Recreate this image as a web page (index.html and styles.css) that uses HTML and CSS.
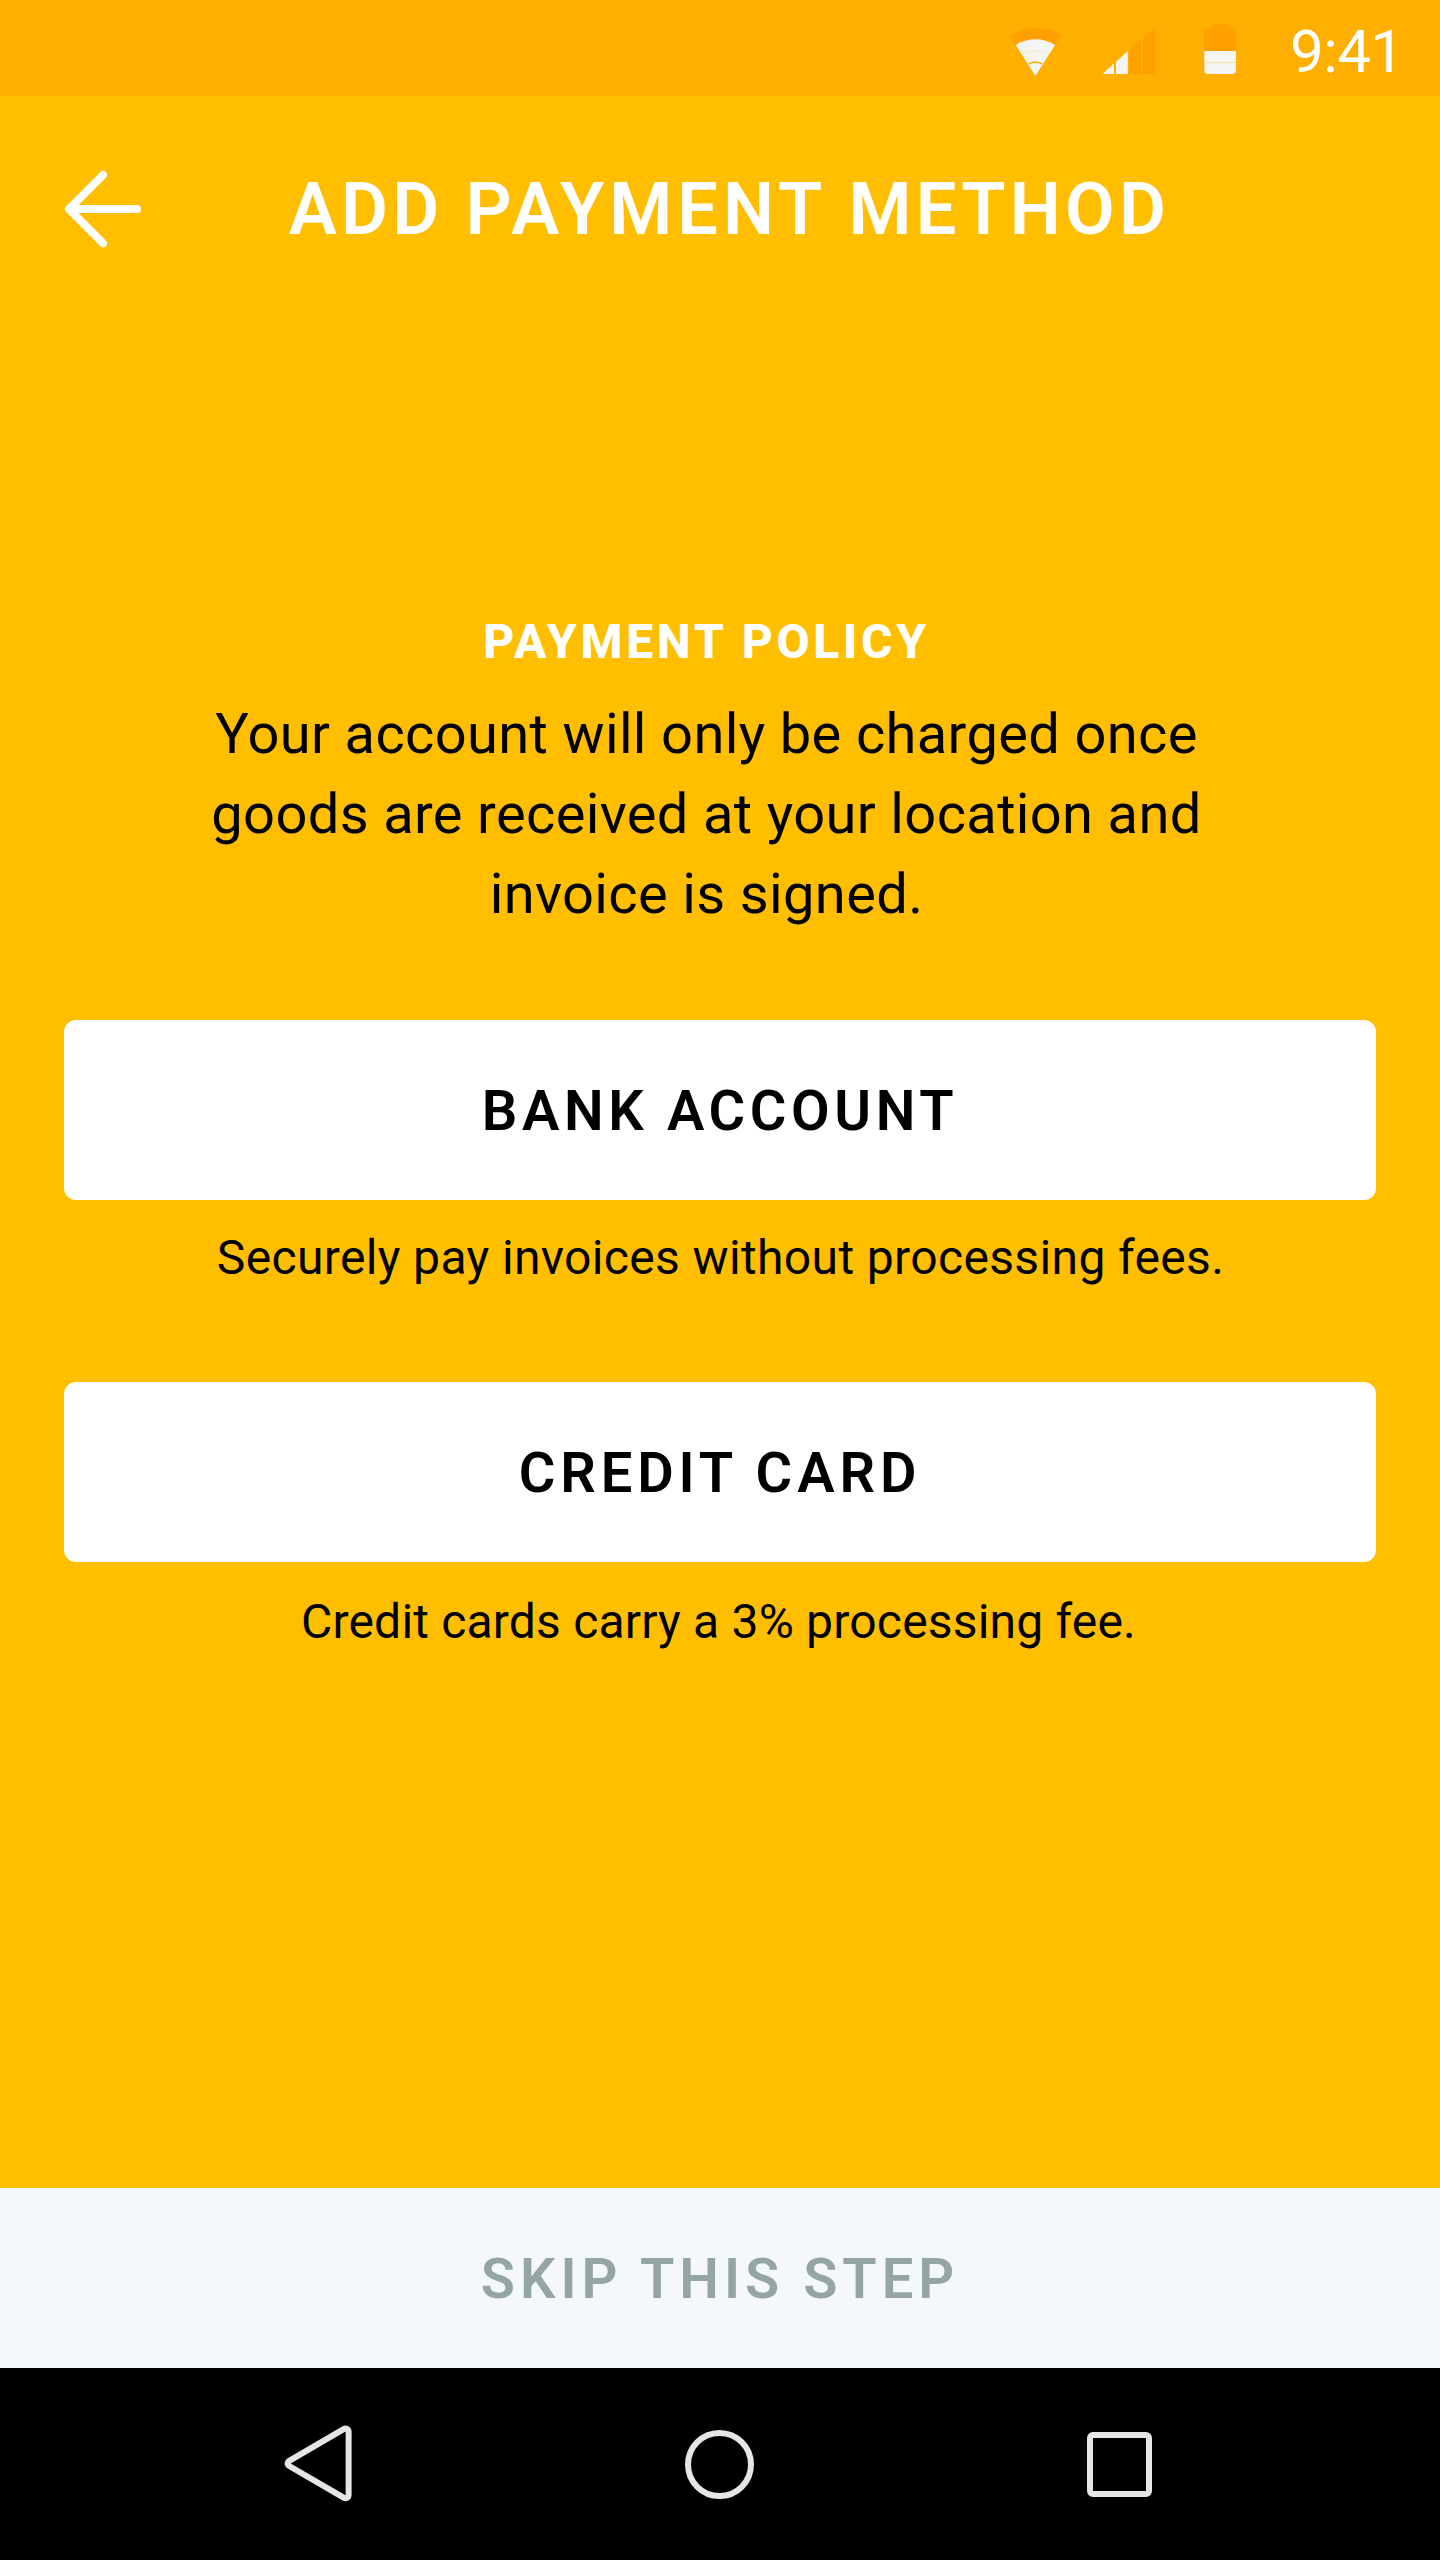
FILE: index.html
```html
<!DOCTYPE html>
<html lang="en">
<head>
<meta charset="utf-8">
<title>Add Payment Method</title>
<link rel="stylesheet" href="styles.css">
</head>
<body>
<div class="screen">
  <div class="status-bar">
    <svg class="status-wifi" width="53" height="54" viewBox="1009 24 53 54" aria-hidden="true">
      <path class="icon-dim" d="M1035.4 76L1009.6 35.5A48 48 0 0 1 1061.2 35.5Z"/>
      <path class="icon-lit" d="M1035.4 76L1015.7 45A36.7 36.7 0 0 1 1055.1 45Z"/>
      <path class="wifi-line" d="M1022 54.9A25 25 0 0 1 1048.8 54.9"/>
      <path class="wifi-gap" d="M1028.6 64.2A13 13 0 0 1 1042.2 64.2"/>
    </svg>
    <svg class="status-signal" width="54" height="54" viewBox="1102 24 54 54" aria-hidden="true">
      <path class="icon-lit" d="M1102.6 74L1114 63.2V74ZM1116 74V61.7L1127.8 51V74Z"/>
      <path class="icon-dim" d="M1129.5 74V49.7L1141 39.8V74ZM1143 74V38.3L1155 28V74Z"/>
    </svg>
    <svg class="status-battery" width="33" height="54" viewBox="1204 24 33 54" aria-hidden="true">
      <path class="icon-dim" d="M1204.3 51V32A4 4 0 0 1 1208.3 28H1212V24H1228V28H1232A4 4 0 0 1 1236 32V51Z"/>
      <path class="icon-lit" d="M1204.3 51H1236V70A4 4 0 0 1 1232 74H1208.3A4 4 0 0 1 1204.3 70Z"/>
      <path class="battery-line" d="M1204.3 62.5H1236"/>
    </svg>
    <span class="clock">9:41</span>
  </div>

  <header class="header">
    <svg class="back" width="80" height="80" viewBox="63 169 80 80" role="img" aria-label="Back">
      <path d="M103 175L69 209L103 243.3M69 209H137"/>
    </svg>
    <h1 class="title">ADD <span class="title-wide">PAYMENT </span>METHOD</h1>
  </header>

  <main class="content">
    <section class="policy">
      <h2 class="policy-title">PAYMENT POLICY</h2>
      <p class="policy-text">Your account will only be charged once<br>goods are received at your location and<br>invoice is signed.</p>
    </section>
    <button class="option option-bank" type="button">BANK ACCOUNT</button>
    <p class="note note-bank">Securely pay invoices without processing fees.</p>
    <button class="option option-card" type="button">CREDIT CARD</button>
    <p class="note note-card">Credit cards carry a 3% processing fee.</p>
  </main>

  <button class="skip" type="button">SKIP THIS STEP</button>

  <nav class="nav-bar">
    <svg width="80" height="80" viewBox="278 2424 80 80" role="img" aria-label="Back">
      <path class="nav-shape" d="M290.7 2463.4L345.6 2431.5V2495.3Z"/>
    </svg>
    <svg width="80" height="80" viewBox="679 2424 80 80" role="img" aria-label="Home">
      <circle class="nav-ring" cx="719.5" cy="2464.5" r="31.5"/>
    </svg>
    <svg width="80" height="80" viewBox="1080 2424 80 80" role="img" aria-label="Recents">
      <rect class="nav-shape" x="1093" y="2438" width="53" height="53"/>
    </svg>
  </nav>
</div>
</body>
</html>
```
FILE: styles.css
```css
* {
  box-sizing: border-box;
}

body,
h1,
h2,
p {
  margin: 0;
}

body {
  font-family: Roboto, "Noto Sans", sans-serif;
}

button {
  display: block;
  border: 0;
  font-family: inherit;
}

svg {
  display: block;
  flex: none;
}

.screen {
  display: flex;
  flex-direction: column;
  width: 1440px;
  height: 2560px;
  overflow: hidden;
  background: #ffbf00;
}

/* Status bar */
.status-bar {
  display: flex;
  flex: none;
  align-items: flex-start;
  height: 96px;
  padding: 24px 0 0 1009px;
  background: #ffaf00;
}

.status-signal {
  margin-left: 40px;
}

.status-battery {
  margin-left: 48px;
}

.icon-lit {
  fill: #f4f4f3;
}

.icon-dim {
  fill: #ff9f00;
}

.wifi-line,
.battery-line {
  fill: none;
  stroke: #fad98c;
  stroke-width: 0.8;
}

.wifi-line {
  stroke-width: 0.5;
}

.wifi-gap {
  fill: none;
  stroke: #ffaf00;
  stroke-width: 1.5;
}

.clock {
  margin: -8px 0 0 53px;
  color: #fff;
  font-size: 60px;
  line-height: 71px;
  letter-spacing: -0.56px;
}

/* Header */
.header {
  display: flex;
  flex: none;
  align-items: flex-start;
  height: 227px;
  padding: 71px 0 0 63px;
}

.back {
  margin-top: 2px;
  fill: none;
  stroke: #fff;
  stroke-width: 8;
  stroke-linecap: round;
  stroke-linejoin: round;
}

.title {
  margin-left: 145.8px;
  color: #fff;
  font-size: 72px;
  font-weight: 600;
  line-height: 85px;
  letter-spacing: 4.25px;
  white-space: nowrap;
}

.title-wide {
  letter-spacing: 5.05px;
}

/* Content */
.content {
  flex: 1;
  padding: 290px 64px 0;
}

.policy {
  width: 1285px;
  text-align: center;
}

.policy-title {
  color: #fff;
  font-size: 48px;
  font-weight: 800;
  line-height: 57px;
  letter-spacing: 3.7px;
}

.policy-text {
  margin-top: 24px;
  font-size: 56px;
  line-height: 80px;
  letter-spacing: 0.36px;
}

.option,
.skip {
  width: 100%;
  height: 180px;
  padding: 2px 0 0;
  font-size: 56px;
  font-weight: 600;
  line-height: 178px;
}

.option {
  border-radius: 12px;
  background: #fff;
  color: #000;
}

.option-bank {
  margin-top: 86px;
  letter-spacing: 4.64px;
}

.option-card {
  margin-top: 96px;
  letter-spacing: 4.92px;
}

.note {
  font-size: 48px;
  line-height: 57px;
  text-align: center;
}

.note-bank {
  margin-top: 29px;
  padding-left: 1px;
  letter-spacing: 0.36px;
}

.note-card {
  margin-top: 31px;
  padding-right: 3px;
  letter-spacing: 0.19px;
}

.skip {
  flex: none;
  background: #f4f8fb;
  color: #95a5a5;
  letter-spacing: 4.98px;
}

/* Navigation bar */
.nav-bar {
  display: flex;
  flex: none;
  align-items: center;
  gap: 321px;
  height: 192px;
  padding-left: 278px;
  background: #000;
}

.nav-shape {
  fill: #000;
  stroke: #e6e7e4;
  stroke-width: 12;
  stroke-linejoin: round;
  paint-order: stroke;
}

.nav-ring {
  fill: none;
  stroke: #e6e7e4;
  stroke-width: 6;
}
```
